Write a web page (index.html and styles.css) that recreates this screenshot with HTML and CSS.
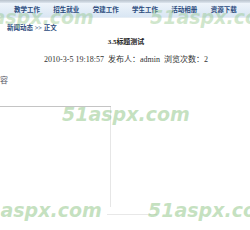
FILE: index.html
```html
<!doctype html>
<html>
<head>
<meta charset="utf-8">
<link rel="stylesheet" href="styles.css">
</head>
<body>
<div class="topline"></div>
<div class="nav">
  <a href="#">教学工作</a>
  <a href="#">招生就业</a>
  <a href="#">党建工作</a>
  <a href="#">学生工作</a>
  <a href="#">活动相册</a>
  <a href="#">资源下载</a>
</div>
<div class="crumb">新闻动态 &gt;&gt; 正文</div>
<div class="article">
  <h1 class="title">3.5标题测试</h1>
  <div class="info">2010-3-5 19:18:57&nbsp; 发布人：admin&nbsp; 浏览次数：2</div>
  <div class="content">容</div>
</div>
<div class="lower">
  <div class="side"></div>
  <div class="foot"></div>
</div>
<!-- watermark layer -->
<div class="wm w1">51aspx.com</div>
<div class="wm w2">51aspx.com</div>
<div class="wm w3">51aspx.com</div>
<div class="wm w4">51aspx.com</div>
<div class="wm w5">51aspx.com</div>
</body>
</html>
```

FILE: styles.css
```css
body {
    margin: 0;
    background: #fff;
    font-family: "Liberation Serif", "Noto Sans CJK SC", serif;
    color: #333;
    width: 250px;
    height: 230px;
    overflow: hidden;
    position: relative;
}
.topline {
    height: 3px;
    background: linear-gradient(#b8c2cc, #dde5ee);
}
.nav {
    display: flex;
    height: 14px;
    padding-left: 14px;
    background: linear-gradient(#eef4fa, #d9e6f3);
    border-bottom: 1px solid #e6edf4;
}
.nav a {
    width: 41px;
    font-size: 6.5px;
    line-height: 14px;
    font-weight: bold;
    color: #2a4a7c;
    text-decoration: none;
}
.crumb {
    padding: 5px 0 0 7px;
    height: 11px;
    font-size: 6.5px;
    line-height: 10px;
    font-weight: bold;
    color: #2a4a7c;
}
.article {
    padding-top: 3px;
}
.title {
    margin: 0;
    text-align: center;
    font-size: 7px;
    line-height: 10px;
    font-weight: bold;
    color: #222;
    padding-left: 2px;
}
.info {
    margin-top: 8px;
    text-align: center;
    font-size: 8px;
    line-height: 10px;
    color: #333;
    padding-left: 2px;
}
.content {
    margin-top: 11px;
    font-size: 8px;
    line-height: 10px;
    color: #556;
}
.lower {
    margin-top: 20px;
    width: 111px;
    border-top: 1px solid #c4c4c4;
}
.side {
    height: 100px;
    border-right: 1px solid #e6e6e6;
}
.foot {
    margin: 7px 0 0 107px;
    width: 50px;
    border-top: 1px solid #e8e8e8;
}
.wm {
    position: absolute;
    font-family: "DejaVu Sans", sans-serif;
    font-weight: bold;
    font-style: italic;
    font-size: 19px;
    line-height: 20px;
    color: rgba(140, 195, 130, 0.5);
    white-space: nowrap;
    pointer-events: none;
}
.w1 { left: -34px; top: 7px; opacity: 0.8; }
.w2 { left: 150px; top: 7px; opacity: 0.8; }
.w3 { left: 62px; top: 104px; }
.w4 { left: -26px; top: 200px; }
.w5 { left: 148px; top: 200px; }
```
